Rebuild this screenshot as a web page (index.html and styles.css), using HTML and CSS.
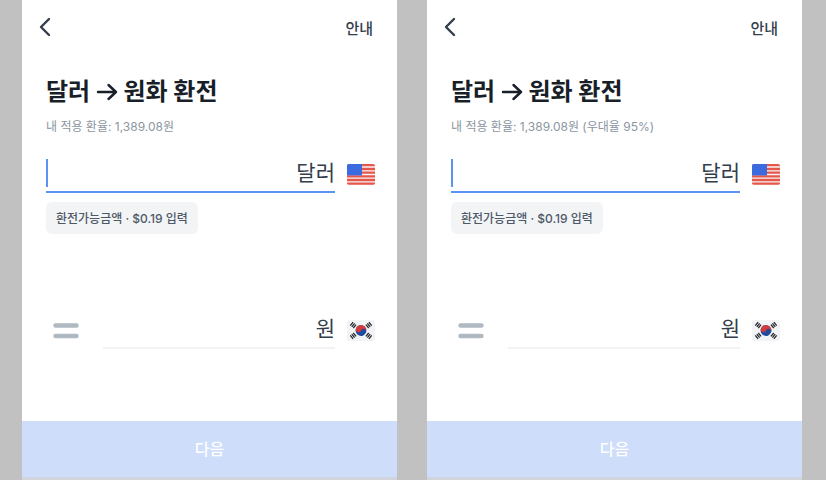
FILE: index.html
```html
<!DOCTYPE html>
<html lang="ko">

<head>
    <meta charset="UTF-8">
    <meta name="viewport" content="width=device-width, initial-scale=1.0">
    <title>달러 → 원화 환전</title>
    <link rel="stylesheet" href="styles.css">
</head>
<body>
    <!-- Shared icons -->
    <svg class="sprite" aria-hidden="true">
        <symbol id="icon-back" viewBox="0 0 12 20">
            <path d="M10 2 L2 10 L10 18" fill="none" stroke="#333d4b" stroke-width="2.4" stroke-linecap="round" stroke-linejoin="round"/>
        </symbol>
        <symbol id="icon-arrow" viewBox="0 0 22 20">
            <path d="M2 10 H20 M12.5 3 L20 10 L12.5 17" fill="none" stroke="#191f28" stroke-width="2.4" stroke-linecap="round" stroke-linejoin="round"/>
        </symbol>
        <symbol id="icon-equal" viewBox="0 0 26 16">
            <path d="M2.5 2.5 H23.5 M2.5 13 H23.5" stroke="#b0b8c1" stroke-width="4.4" stroke-linecap="round"/>
        </symbol>
        <symbol id="flag-us" viewBox="0 0 28 21">
            <clipPath id="us-clip"><rect width="28" height="21" rx="2"/></clipPath>
            <g clip-path="url(#us-clip)">
                <rect width="28" height="21" fill="#fbf3f3"/>
                <path d="M0 1.2 H28 M0 5 H28 M0 8.7 H28 M0 12.3 H28 M0 16 H28 M0 19.7 H28" stroke="#e4574b" stroke-width="2.3"/>
                <rect width="15" height="11.4" fill="#3c6be0"/>
            </g>
        </symbol>
        <symbol id="flag-kr" viewBox="0 0 28 21">
            <rect width="28" height="21" rx="2" fill="#f2f3f5"/>
            <g transform="rotate(20 14 10.5)">
                <circle cx="14" cy="10.5" r="5.4" fill="#1f4a9e"/>
                <path d="M8.6 10.5 A5.4 5.4 0 0 1 19.4 10.5 A2.7 2.7 0 0 0 14 10.5 A2.7 2.7 0 0 1 8.6 10.5" fill="#d33a3c"/>
            </g>
            <g stroke="#24272c" stroke-width="1.3">
                <path d="M3.3 5.6 L6.1 2.2 M4.8 6.8 L7.6 3.4 M6.3 8 L9.1 4.6"/>
                <path d="M24.7 5.6 L21.9 2.2 M23.2 6.8 L20.4 3.4 M21.7 8 L18.9 4.6"/>
                <path d="M3.3 15.4 L6.1 18.8 M4.8 14.2 L7.6 17.6 M6.3 13 L9.1 16.4"/>
                <path d="M24.7 15.4 L21.9 18.8 M23.2 14.2 L20.4 17.6 M21.7 13 L18.9 16.4"/>
            </g>
        </symbol>
    </svg>

    <div class="screens">
        <main class="screen">
            <header class="top-bar">
                <button class="back-button" type="button" aria-label="뒤로"><svg class="icon-back"><use href="#icon-back"/></svg></button>
                <a class="guide-link" href="#">안내</a>
            </header>
            <form class="exchange">
                <h1 class="title">달러 <svg class="icon-arrow" role="img" aria-label="→"><use href="#icon-arrow"/></svg> 원화 환전</h1>
                <p class="rate">내 적용 환율: 1,389.08원</p>
                <div class="amount-row">
                    <div class="field field-active">
                        <input class="amount" id="usd1" type="text" inputmode="decimal">
                        <label class="unit" for="usd1">달러</label>
                    </div>
                    <svg class="flag"><use href="#flag-us"/></svg>
                </div>
                <button class="fill-button" type="button">환전가능금액 · $0.19 입력</button>
                <div class="amount-row amount-row-result">
                    <svg class="icon-equal"><use href="#icon-equal"/></svg>
                    <div class="field">
                        <input class="amount" id="krw1" type="text" inputmode="decimal">
                        <label class="unit" for="krw1">원</label>
                    </div>
                    <svg class="flag"><use href="#flag-kr"/></svg>
                </div>
            </form>
            <button class="next-button" type="button" disabled>다음</button>
        </main>

        <main class="screen">
            <header class="top-bar">
                <button class="back-button" type="button" aria-label="뒤로"><svg class="icon-back"><use href="#icon-back"/></svg></button>
                <a class="guide-link" href="#">안내</a>
            </header>
            <form class="exchange">
                <h1 class="title">달러 <svg class="icon-arrow" role="img" aria-label="→"><use href="#icon-arrow"/></svg> 원화 환전</h1>
                <p class="rate">내 적용 환율: 1,389.08원 (우대율 95%)</p>
                <div class="amount-row">
                    <div class="field field-active">
                        <input class="amount" id="usd2" type="text" inputmode="decimal">
                        <label class="unit" for="usd2">달러</label>
                    </div>
                    <svg class="flag"><use href="#flag-us"/></svg>
                </div>
                <button class="fill-button" type="button">환전가능금액 · $0.19 입력</button>
                <div class="amount-row amount-row-result">
                    <svg class="icon-equal"><use href="#icon-equal"/></svg>
                    <div class="field">
                        <input class="amount" id="krw2" type="text" inputmode="decimal">
                        <label class="unit" for="krw2">원</label>
                    </div>
                    <svg class="flag"><use href="#flag-kr"/></svg>
                </div>
            </form>
            <button class="next-button" type="button" disabled>다음</button>
        </main>
    </div>
</body>
</html>
```

FILE: styles.css
```css
* {
    box-sizing: border-box;
}

body {
    margin: 0;
    background-color: #c1c1c1;
    color: #333d4b;
    font-family: Inter, "Noto Sans CJK KR", sans-serif;
}

button,
input {
    font-family: inherit;
    color: inherit;
    border: none;
    padding: 0;
    background: none;
}

.sprite {
    position: absolute;
    width: 0;
    height: 0;
}

.screens {
    display: grid;
    grid-template-columns: repeat(2, minmax(0, 1fr));
    gap: 30px;
    min-height: 100vh;
    padding: 0 24px 0 22px;
}

.screen {
    display: flex;
    flex-direction: column;
    background-color: #fff;
    border-bottom: 3px solid #d1d4da;
}

.top-bar {
    display: flex;
    justify-content: space-between;
    align-items: center;
    height: 54px;
    padding: 0 24px 0 17px;
}

.back-button {
    display: flex;
    cursor: pointer;
}

.icon-back {
    width: 12px;
    height: 20px;
}

.guide-link {
    font-size: 15px;
    font-weight: 500;
    color: #333d4b;
    text-decoration: none;
}

.exchange {
    flex: 1;
    padding: 21px 22px 0 24px;
}

.title {
    margin: 0;
    font-size: 24px;
    line-height: 34px;
    font-weight: 700;
    color: #191f28;
}

.icon-arrow {
    width: 22px;
    height: 20px;
    vertical-align: -2px;
}

.rate {
    margin: 8px 0 0;
    font-size: 12px;
    line-height: 20px;
    font-weight: 400;
    color: #8b95a1;
}

.amount-row {
    display: flex;
    align-items: center;
    gap: 12px;
    margin-top: 19px;
}

.field {
    flex: 1;
    display: flex;
    align-items: center;
    min-width: 0;
    height: 37px;
    border-bottom: 2px solid #f2f3f5;
}

.field-active {
    border-color: #5b93f5;
}

.amount {
    flex: 1;
    min-width: 0;
    height: 28px;
    font-size: 21px;
    outline: none;
}

.field-active .amount {
    margin-bottom: 2px;
    border-left: 2px solid #5b93f5;
}

.unit {
    font-size: 21px;
    line-height: 30px;
    margin-bottom: 2px;
}

.flag {
    width: 28px;
    height: 21px;
}

.fill-button {
    height: 32px;
    margin-top: 9px;
    padding: 0 10px 2px;
    border-radius: 6px;
    background-color: #f2f4f6;
    color: #4e5968;
    font-size: 12px;
    font-weight: 500;
    cursor: pointer;
}

.amount-row-result {
    margin-top: 78px;
    padding-left: 7px;
}

.icon-equal {
    width: 26px;
    height: 16px;
    margin-right: 12px;
}

.next-button {
    height: 56px;
    padding-bottom: 2px;
    background-color: #cdddfa;
    color: #fff;
    font-size: 16px;
    font-weight: 500;
}
```
